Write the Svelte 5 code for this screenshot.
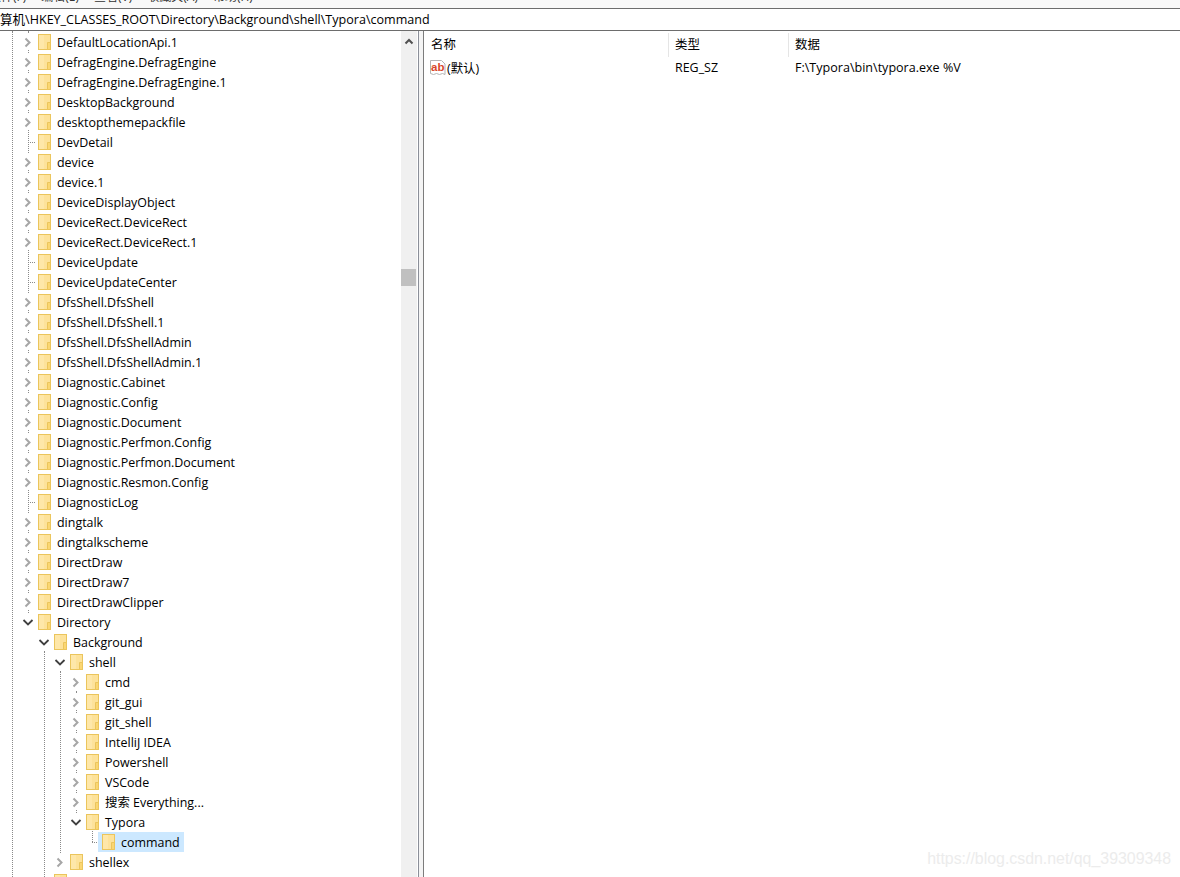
<script>
  // [name, level, state] state: c = closed, o = open, n = leaf
  const rows = [
    ["DefaultLocationApi.1", 0, "c"],
    ["DefragEngine.DefragEngine", 0, "c"],
    ["DefragEngine.DefragEngine.1", 0, "c"],
    ["DesktopBackground", 0, "c"],
    ["desktopthemepackfile", 0, "c"],
    ["DevDetail", 0, "n"],
    ["device", 0, "c"],
    ["device.1", 0, "c"],
    ["DeviceDisplayObject", 0, "c"],
    ["DeviceRect.DeviceRect", 0, "c"],
    ["DeviceRect.DeviceRect.1", 0, "c"],
    ["DeviceUpdate", 0, "n"],
    ["DeviceUpdateCenter", 0, "n"],
    ["DfsShell.DfsShell", 0, "c"],
    ["DfsShell.DfsShell.1", 0, "c"],
    ["DfsShell.DfsShellAdmin", 0, "c"],
    ["DfsShell.DfsShellAdmin.1", 0, "c"],
    ["Diagnostic.Cabinet", 0, "c"],
    ["Diagnostic.Config", 0, "c"],
    ["Diagnostic.Document", 0, "c"],
    ["Diagnostic.Perfmon.Config", 0, "c"],
    ["Diagnostic.Perfmon.Document", 0, "c"],
    ["Diagnostic.Resmon.Config", 0, "c"],
    ["DiagnosticLog", 0, "n"],
    ["dingtalk", 0, "c"],
    ["dingtalkscheme", 0, "c"],
    ["DirectDraw", 0, "c"],
    ["DirectDraw7", 0, "c"],
    ["DirectDrawClipper", 0, "c"],
    ["Directory", 0, "o"],
    ["Background", 1, "o"],
    ["shell", 2, "o"],
    ["cmd", 3, "c"],
    ["git_gui", 3, "c"],
    ["git_shell", 3, "c"],
    ["IntelliJ IDEA", 3, "c"],
    ["Powershell", 3, "c"],
    ["VSCode", 3, "c"],
    ["搜索 Everything...", 3, "c"],
    ["Typora", 3, "o"],
    ["command", 4, "n"],
    ["shellex", 2, "c"],
    ["", 1, "n"]
  ];
  const menus = ["文件(F)", "编辑(E)", "查看(V)", "收藏夹(A)", "帮助(H)"];
  // vertical dotted guides: x and the row range they span
  const guides = [
    { x: 12, top: 0, bottom: 846 },
    { x: 28, top: 0, bottom: 590 },
    { x: 44, top: 620, bottom: 846 },
    { x: 60, top: 640, bottom: 830 },
    { x: 76, top: 660, bottom: 790 },
    { x: 92, top: 800, bottom: 811 }
  ];
</script>

<main class="regedit">
  <div class="menubar">
    {#each menus as m}<span>{m}</span>{/each}
  </div>
  <div class="address">算机\HKEY_CLASSES_ROOT\Directory\Background\shell\Typora\command</div>
  <div class="panes">
    <div class="tree">
      <div class="rows">
        {#each guides as g}
          <i class="vline" style="left:{g.x}px;top:{g.top}px;height:{g.bottom - g.top}px"></i>
        {/each}
        {#each rows as r}
          <div class="row" style="padding-left:{r[1] * 16}px">
            <span class="twist">
              {#if r[2] === "c"}
                <svg width="16" height="16" viewBox="0 0 16 16"><path d="M5.500 4.500l4 4-4 4" fill="none" stroke="#a6a6a6" stroke-width="2"/></svg>
              {:else if r[2] === "o"}
                <svg width="16" height="16" viewBox="0 0 16 16"><path d="M3.500 6l4.500 4.500L12.500 6" fill="none" stroke="#404040" stroke-width="1.8"/></svg>
              {:else}
                <i class="hline"></i>
              {/if}
            </span>
            <span class="item" class:selected={r[0] === "command"}>
              <svg class="folder" width="13" height="16" viewBox="0 0 13 16">
                <rect x=".5" y=".5" width="12" height="15" fill="#fde29a" stroke="#ebc55c"/>
                <rect x="1" y="1" width="5" height="14" fill="#fee7a9"/>
                <path d="M9.500 15.500v-7h3v7z" fill="#fbd672" stroke="#ebc55c"/>
              </svg>
              <span class="label">{r[0]}</span>
            </span>
          </div>
        {/each}
      </div>
      <div class="scrollbar">
        <svg class="up" width="16" height="16" viewBox="0 0 16 16"><path d="M4.500 10.500l3.500-3.500 3.500 3.500" fill="none" stroke="#505050" stroke-width="2"/></svg>
        <div class="thumb"></div>
      </div>
    </div>
    <div class="splitter"></div>
    <div class="list">
      <div class="head">
        <span class="col c1">名称</span>
        <span class="col c2">类型</span>
        <span class="col c3">数据</span>
      </div>
      <div class="entry">
        <span class="c1 name">
          <svg width="16" height="16" viewBox="0 0 16 16">
            <path d="M.5.5h11l3.500 3.500v10.500l-2.500-1-3 1-3-1-3 1-3-1z" fill="#fff" stroke="#b4b4b4"/>
            <text x="1" y="11" class="ab">ab</text>
          </svg>
          (默认)
        </span>
        <span class="c2">REG_SZ</span>
        <span class="c3 data">F:\Typora\bin\typora.exe %V</span>
      </div>
    </div>
  </div>
  <div class="mark">https://blog.csdn.net/qq_39309348</div>
</main>

<style>
  :global(body) {
    margin: 0;
    background: #fff;
  }
  .regedit {
    width: 1180px;
    height: 877px;
    overflow: hidden;
    position: relative;
    font-family: "Open Sans", "Noto Sans CJK SC", sans-serif;
    font-size: 12.45px;
    color: #000;
    background: #fff;
    display: flex;
    flex-direction: column;
  }
  .menubar {
    height: 8px;
    background: #f8f8f8;
    display: flex;
    gap: 15px;
    align-items: flex-end;
    overflow: hidden;
    margin-left: -11px;
    line-height: 16px;
    flex: none;
  }
  .menubar span {
    flex: none;
    margin-bottom: 3px;
    color: #333;
    font-size: 12px;
  }
  .address {
    height: 21px;
    line-height: 22px;
    font-size: 12.55px;
    border-top: 1px solid #6d6d6d;
    border-bottom: 1px solid #6d6d6d;
    white-space: nowrap;
    flex: none;
  }
  .panes {
    flex: 1;
    display: flex;
    min-height: 0;
  }
  .tree {
    width: 417px;
    flex: none;
    display: flex;
    overflow: hidden;
  }
  .rows {
    flex: 1;
    position: relative;
    padding-top: 1px;
    padding-left: 20px;
  }
  .vline {
    position: absolute;
    width: 0;
    border-left: 1px dotted #8a8a8a;
  }
  .row {
    height: 20px;
    display: flex;
    align-items: center;
    white-space: nowrap;
    position: relative;
  }
  .twist {
    width: 16px;
    height: 20px;
    display: flex;
    align-items: center;
    justify-content: center;
    flex: none;
    position: relative;
  }
  .twist svg {
    background: #fff;
  }
  .hline {
    position: absolute;
    left: 8px;
    top: 10px;
    width: 7px;
    border-top: 1px dotted #8a8a8a;
  }
  .item {
    display: flex;
    align-items: center;
    height: 20px;
    margin-left: -2px;
    padding: 0 4px;
    position: relative;
  }
  .selected {
    background: #cce8ff;
  }
  .folder {
    flex: none;
  }
  .label {
    margin-left: 6px;
  }
  .scrollbar {
    width: 16px;
    flex: none;
    background: #f0f0f0;
    position: relative;
  }
  .up {
    display: block;
    margin-top: 2px;
  }
  .thumb {
    position: absolute;
    top: 238px;
    left: 0;
    width: 15px;
    height: 17px;
    background: #c0c0c0;
  }
  .splitter {
    width: 6px;
    margin-left: 1px;
    flex: none;
    box-sizing: border-box;
    background: #f4f4f4;
    border-left: 1px solid #8b8f99;
    border-right: 1px solid #7c7c7c;
  }
  .list {
    flex: 1;
    padding-top: 2px;
  }
  .head {
    display: flex;
    height: 24px;
    align-items: center;
  }
  .col {
    height: 24px;
    line-height: 24px;
    border-right: 1px solid #e5e5e5;
    box-sizing: border-box;
  }
  .c1 {
    width: 245px;
    padding-left: 7px;
    box-sizing: border-box;
  }
  .c2 {
    width: 120px;
    padding-left: 6px;
    box-sizing: border-box;
  }
  .c3 {
    padding-left: 6px;
    border-right: none;
  }
  .data {
    font-size: 12.55px;
  }
  .entry {
    display: flex;
    height: 20px;
    align-items: center;
    padding-top: 1px;
    box-sizing: border-box;
  }
  .name {
    display: flex;
    align-items: center;
    gap: 1px;
    padding-left: 6px;
  }
  .ab {
    font: bold 11.500px "Liberation Sans", sans-serif;
    fill: #d9482b;
  }
  .mark {
    position: absolute;
    right: 9px;
    bottom: 9px;
    font-family: "Liberation Sans", sans-serif;
    font-size: 15.9px;
    color: #ececec;
  }
</style>
